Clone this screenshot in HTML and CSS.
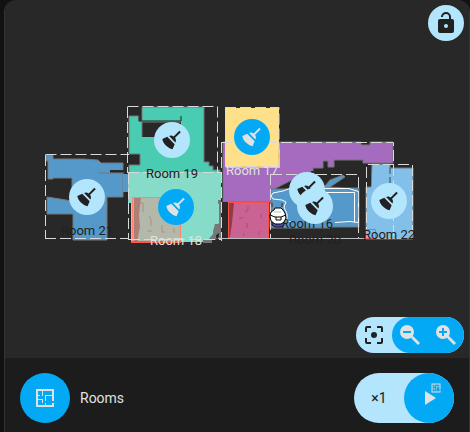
FILE: index.html
```html
<!DOCTYPE html>
<html lang="en">
<head>
<meta charset="utf-8">
<meta name="viewport" content="width=device-width, initial-scale=1">
<title>Vacuum map</title>
<link rel="stylesheet" href="styles.css">
</head>
<body>
<svg class="symbols" aria-hidden="true">
  <symbol id="broom" viewBox="0 0 24 24"><path d="M19.36 2.72 20.78 4.14 15.06 9.85C16.13 11.39 16.28 13.24 15.38 14.44L9.06 8.12C10.26 7.22 12.11 7.37 13.65 8.44L19.36 2.72M5.93 17.57C3.92 15.56 2.69 13.16 2.35 10.92L7.23 8.83 14.67 16.27 12.58 21.15C10.34 20.81 7.94 19.58 5.93 17.57Z"/></symbol>
  <symbol id="plan" viewBox="0 0 24 24"><path fill-rule="evenodd" d="M3 3H21V15H19V5H5V19H19V17H21V21H3Z"/><path d="M9 4H10V10H9ZM12 9H19V10H13V15H12ZM5 13H10V17H9V14H5ZM12 17H13V20H12ZM5 9H7V10H5Z"/></symbol>
</svg>
<main class="card">
  <section class="map" aria-label="Map">
    <button class="round lock" type="button" aria-label="Unlock map">
      <svg viewBox="0 0 24 24"><path d="M18 8H17V6A5 5 0 0 0 7 6H9A3 3 0 0 1 15 6V8H6A2 2 0 0 0 4 10V20A2 2 0 0 0 6 22H18A2 2 0 0 0 20 20V10A2 2 0 0 0 18 8M12 17A2 2 0 1 1 12 13A2 2 0 0 1 12 17Z"/></svg>
    </button>
    <div class="stage">
      <svg class="floor" viewBox="44 106 386 146" aria-hidden="true">
        <g stroke="#777" stroke-width="1">
          <path fill="#5499c9" d="M46 155H53V159L83 159L98 160L101 163H123V197H107V240H73V214H47V197L60 199L72 201V178H53V179H48V161H46Z"/>
          <path fill="#4accb2" d="M142 107H204V162H209V166H213V170H220V176H129V165H140V154H129V116H139V121H142Z"/>
          <path fill="#a46bbe" d="M223 142H361V145H370V142H393V163H363V160H334V167H328V161H323V168H313V171L300 176L272 190V228H270V202H223Z"/>
          <path fill="#5499c9" d="M271 189H284L300 188L325 186L330 180L343 175L345 177L330 187L345 188H359V227H330V228H272V202H271Z"/>
          <path fill="#82bfe9" d="M372 164H390V168H413V239H366V187H371Z"/>
        </g>
        <path fill="#282828" d="M110 170H124V173H110ZM142 122H181V137H142ZM311 171H340V174L325 176H311Z"/>
        <path fill="none" stroke="#777" d="M99 173H124M142 137V122H181"/>
        <path fill="none" stroke="#222" d="M139 116V121H181V116"/>
        <path fill="#5499c9" d="M123 174H129V192H123Z"/>
        <path fill="#282828" d="M371 164V186H368V174H366V164Z"/>
        <path fill="none" stroke="#444" stroke-dasharray="6 3" d="M390 168V184"/>
        <path fill="#86dbc9" d="M128 172H221V200H218V204H220V218L216 236L208 242H131V203H128Z"/>
        <path fill="#777" d="M218 200H221V238H216V225L213 234L208 240L215 240L219 237V204H218Z"/>
        <path fill="#777" d="M215 224H221V232L214 236L213 231ZM203 240H212V243H203Z"/>
        <path fill="#b2b9aa" d="M132 197H181V241H132Z"/>
        <path fill="#b07e76" d="M134 198H141L139 215L140 227L138 237V241H134Z"/>
        <path fill="none" stroke="#ff8573" d="M132.500 241V197.500H180.500V241"/>
        <path fill="#ff5744" d="M131 241H181V243H131Z"/>
        <path stroke="#b58b80" fill="none" d="M141 203H143V212M149 216L151 219V226M162 225V232H165M173 208V212M174 228V233M147 231H152"/>
        <path fill="#ffe08a" d="M225 108H279V167H225Z"/>
        <path fill="none" stroke="#f0c74f" stroke-width="2" d="M226 167H279V149"/>
        <path fill="#282828" d="M223 202H228V238H223ZM272 229H365V238H272Z"/>
        <path fill="#cb6294" d="M228 202H269V239H228Z"/>
        <path fill="#8e3e43" d="M229 203H234L232 223L230 237H229Z"/>
        <path stroke="#a6506b" fill="none" d="M248 206V210L245 212M239 218H243M247 223V228M244 233L243 236M261 214V218M259 231V235"/>
        <path stroke="#ff4e42" fill="none" d="M228.500 239V202.500H268.500V238.500H228"/>
        <path stroke="#5a5960" stroke-width="2" fill="none" d="M272 203V207M282 203V207"/>
        <g fill="none" stroke="#fff" stroke-width="1">
          <path d="M320 188.500H349L358.500 191.500V222.500L350 221.500L335 222.500M291 188L283 191L273 193L271 196L273 199L282 200L286 202L284 207L287 214V221.500H293"/>
          <path d="M326 192.500H354.500V222.500"/>
        </g>
        <g fill="none" stroke="#d9d9d9" stroke-width="1" stroke-dasharray="11 4">
          <path d="M45.500 154.500H129M45.500 155V238M45 238.500H128"/>
          <path d="M127.500 106.500H217.500V173M127.500 107V173M128 172.500H221M128.500 173V240M221.500 142V241"/>
          <path d="M129 239.500H221M225 107.500H279V166.500H225.500V108M221 142.500H393.500V238M271 174.500H358.500V238M366.500 238V164.500H412.500V239M270.500 174V238"/>
        </g>
        <path fill="#bdbdbd" d="M218 238H413V239H218Z"/>
        <path fill="none" stroke="#ef5c64" d="M366 229.500H375.500V238.500H366Z"/>
      </svg>
      <button class="pin room-21" type="button"><span class="dot"><svg><use href="#broom"/></svg></span><span class="name">Room 21</span></button>
      <button class="pin room-19" type="button"><span class="dot"><svg><use href="#broom"/></svg></span><span class="name">Room 19</span></button>
      <button class="pin room-18 selected" type="button"><span class="dot"><svg><use href="#broom"/></svg></span><span class="name">Room 18</span></button>
      <button class="pin room-17 selected" type="button"><span class="dot"><svg><use href="#broom"/></svg></span><span class="name">Room 17</span></button>
      <button class="pin room-16" type="button"><span class="dot"><svg><use href="#broom"/></svg></span><span class="name">Room 16</span></button>
      <button class="pin room-20" type="button"><span class="dot"><svg><use href="#broom"/></svg></span><span class="name">Room 20</span></button>
      <button class="pin room-22" type="button"><span class="dot"><svg><use href="#broom"/></svg></span><span class="name">Room 22</span></button>
      <svg class="robot" viewBox="0 0 18 22" aria-hidden="true">
        <path fill="#4a50b4" stroke="#111" d="M3 13H15V18L12 20H6L3 18Z"/>
        <path fill="#fff" stroke="#000" d="M6 1H12L14 3L16 6L17 11L15 15L12 17H6L2 14L1 9L2 5L5 3Z"/>
        <path fill="none" stroke="#000" d="M1 8L6 10H12L17 8M7 10V13H12V10"/>
        <path fill="none" stroke="#bbb" d="M5 5H12"/>
      </svg>
    </div>
    <div class="zoom">
      <button class="fit" type="button" aria-label="Fit map">
        <svg viewBox="0 0 24 24"><path d="M5 15H3V19A2 2 0 0 0 5 21H9V19H5M5 5H9V3H5A2 2 0 0 0 3 5V9H5M19 3H15V5H19V9H21V5A2 2 0 0 0 19 3M19 19H15V21H19A2 2 0 0 0 21 19V15H19M12 9A3 3 0 1 0 12 15A3 3 0 0 0 12 9Z"/></svg>
      </button>
      <div class="steps">
        <button type="button" aria-label="Zoom out"><svg viewBox="0 0 24 24"><path fill-rule="evenodd" d="M9 2A7 7 0 1 1 9 16A7 7 0 0 1 9 2M5 8V10H13V8Z"/><path d="M12.500 14 14 12.500 16 14 22 20 20 22 14 16Z"/></svg></button>
        <button type="button" aria-label="Zoom in"><svg viewBox="0 0 24 24"><path fill-rule="evenodd" d="M9 2A7 7 0 1 1 9 16A7 7 0 0 1 9 2M8 5V8H5V10H8V13H10V10H13V8H10V5Z"/><path d="M12.500 14 14 12.500 16 14 22 20 20 22 14 16Z"/></svg></button>
      </div>
    </div>
  </section>
  <footer class="bar">
    <button class="mode" type="button"><span class="mode-icon"><svg><use href="#plan"/></svg></span><span>Rooms</span></button>
    <div class="run">
      <button class="repeat" type="button">×1</button>
      <button class="play" type="button" aria-label="Clean rooms">
        <svg viewBox="0 0 24 24"><path d="M8 5V19L19 12Z"/></svg>
        <svg class="badge"><use href="#plan"/></svg>
      </button>
    </div>
  </footer>
</main>
</body>
</html>
```
FILE: styles.css
```css
* {
  box-sizing: border-box;
}

body {
  margin: 0;
  padding: 0 0 0 4px;
  background: #111;
  color: #e1e1e1;
  font-family: Roboto, "Liberation Sans", sans-serif;
}

button {
  display: flex;
  align-items: center;
  justify-content: center;
  margin: 0;
  padding: 0;
  border: 0;
  background: none;
  color: inherit;
  font: inherit;
  cursor: pointer;
}

svg {
  display: block;
  width: 24px;
  height: 24px;
  fill: currentColor;
}

.symbols {
  position: absolute;
  width: 0;
  height: 0;
}

.card {
  display: flex;
  flex-direction: column;
  min-height: 100vh;
  overflow: hidden;
  border: 1px solid #333;
  border-width: 0 1px;
  border-radius: 12px 12px 0 0;
  background: #1c1c1c;
}

.map {
  position: relative;
  display: flex;
  flex: 1;
  align-items: center;
  justify-content: center;
  background: #282828;
}

.round {
  width: 36px;
  height: 36px;
  border-radius: 50%;
  background: #b3e5fc;
  color: #212121;
}

.lock {
  position: absolute;
  top: 5px;
  right: 5px;
}

.stage {
  position: relative;
  width: 386px;
  height: 146px;
}

.floor {
  width: 100%;
  height: 100%;
}

.pin {
  position: absolute;
  flex-direction: column;
  width: 60px;
  gap: 8px;
  color: #212121;
  font-size: 13px;
  line-height: 16px;
}

.dot {
  display: flex;
  align-items: center;
  justify-content: center;
  width: 36px;
  height: 36px;
  border-radius: 50%;
  background: #b3e5fc;
}

.name {
  white-space: nowrap;
}

.selected {
  color: #e1e1e1;
}

.selected .dot {
  background: #03a9f4;
}

.room-21 { left: 13px; top: 73px; }
.room-19 { left: 98px; top: 16px; }
.room-18 { left: 102px; top: 83px; }
.room-17 { left: 178px; top: 13px; }
.room-16 { left: 233px; top: 66px; }
.room-20 { left: 241px; top: 82px; }
.room-22 { left: 315px; top: 77px; }

.robot {
  position: absolute;
  left: 225px;
  top: 101px;
  width: 18px;
  height: 22px;
}

.zoom {
  position: absolute;
  right: 5px;
  bottom: 5px;
  display: flex;
  height: 36px;
  border-radius: 18px;
  background: #b3e5fc;
}

.zoom button {
  width: 36px;
}

.fit {
  color: #212121;
}

.steps {
  display: flex;
  border-radius: 18px;
  background: #03a9f4;
}

.bar {
  display: flex;
  align-items: center;
  justify-content: space-between;
  height: 74px;
  padding: 6px 15px 0;
  font-size: 14px;
}

.mode {
  gap: 10px;
}

.mode-icon {
  display: flex;
  align-items: center;
  justify-content: center;
  width: 50px;
  height: 50px;
  border-radius: 50%;
  background: #03a9f4;
}

.run {
  display: flex;
  border-radius: 25px;
  background: #b3e5fc;
}

.repeat,
.play {
  width: 50px;
  height: 50px;
}

.repeat {
  color: #212121;
}

.play {
  position: relative;
  border-radius: 50%;
  background: #03a9f4;
}

.badge {
  position: absolute;
  top: 9px;
  right: 12px;
  width: 12px;
  height: 12px;
}
```
